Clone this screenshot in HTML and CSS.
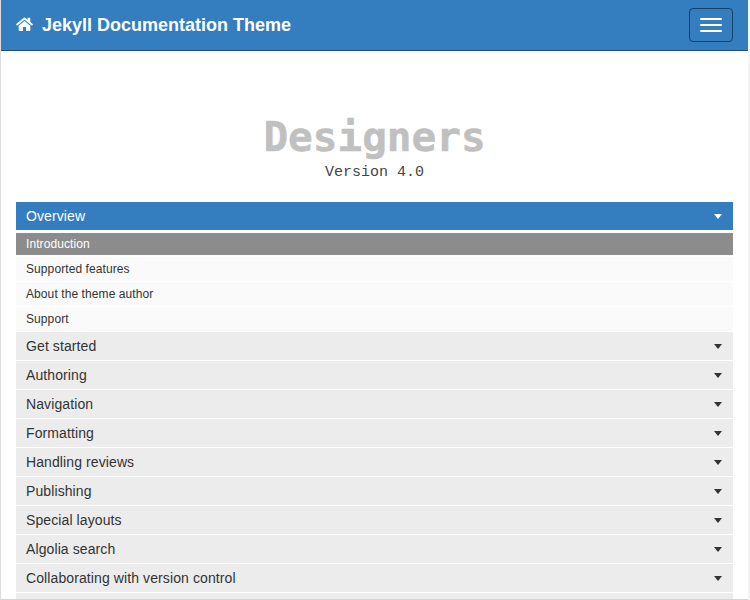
FILE: index.html
```html
<!DOCTYPE html>
<html lang="en">
<head>
<meta charset="utf-8">
<title>Jekyll Documentation Theme</title>
<link rel="stylesheet" href="styles.css">
</head>
<body>
<div class="page">
  <header class="navbar">
    <a class="brand">
      <svg class="home" width="17" height="14" viewBox="0 0 17 14"><path fill="#fff" d="M8.5 4 14.300 8.700V13q0 .9-.9.9H10V9.900H7v4H3.600q-.9 0-.9-.9V8.700ZM0 7.300 7.500 1q1-.8 2 0l2 1.700V.8h2.800V5.100L17 7.300l-1 1.400L8.500 2.700 1 8.700Z"/></svg>
      <span class="brand-name">Jekyll Documentation Theme</span>
    </a>
    <button class="toggle" aria-label="Menu"><span></span><span></span><span></span></button>
  </header>
  <main class="content">
    <h1 class="title">Designers</h1>
    <p class="version">Version 4.0</p>
    <ul class="menu">
      <li class="item open"><span>Overview</span><i class="caret"></i></li>
      <li class="sub active">Introduction</li>
      <li class="sub">Supported features</li>
      <li class="sub">About the theme author</li>
      <li class="sub">Support</li>
      <li class="item"><span>Get started</span><i class="caret"></i></li>
      <li class="item"><span>Authoring</span><i class="caret"></i></li>
      <li class="item"><span>Navigation</span><i class="caret"></i></li>
      <li class="item"><span>Formatting</span><i class="caret"></i></li>
      <li class="item"><span>Handling reviews</span><i class="caret"></i></li>
      <li class="item"><span>Publishing</span><i class="caret"></i></li>
      <li class="item"><span>Special layouts</span><i class="caret"></i></li>
      <li class="item"><span>Algolia search</span><i class="caret"></i></li>
      <li class="item"><span>Collaborating with version control</span><i class="caret"></i></li>
      <li class="item"></li>
    </ul>
  </main>
</div>
</body>
</html>
```
FILE: styles.css
```css
* { box-sizing: border-box; }
body { margin: 0; background: #f4f4f4; font-family: "Liberation Sans", Arial, sans-serif; color: #333; }
.page { width: 748px; height: 600px; overflow: hidden; background: #fff; border-left: 1px solid #dcdcdc; border-bottom: 1px solid #d4d4d4; }
.navbar { height: 51px; background: #347dbe; border-bottom: 1px solid #205081; display: flex; justify-content: space-between; align-items: flex-start; padding: 8px 15px 0; }
.brand { display: flex; align-items: center; height: 34px; color: #fff; font-size: 18px; font-weight: bold; }
.home { display: block; margin: 0 9px 2px 0; }
.brand-name { white-space: nowrap; width: 249px; }
.toggle { width: 44px; height: 34px; padding: 0; background: transparent; border: 1px solid #163f68; border-radius: 4px; display: flex; flex-direction: column; align-items: center; justify-content: center; gap: 4px; }
.toggle span { width: 22px; height: 2px; background: #fff; border-radius: 1px; }
.content { padding: 61px 15px 0; }
.title { margin: 0; height: 51px; text-align: center; font: bold 41px/50px "DejaVu Sans Mono", monospace; color: #c0c0c0; -webkit-text-stroke: 0.5px #c0c0c0; }
.version { margin: 0; height: 20px; text-align: center; font: 15px/20px "Liberation Mono", monospace; color: #444; }
.menu { list-style: none; margin: 19px 0 0; padding: 0; }
.item { height: 28px; margin-bottom: 1px; padding: 0 10px; background: #ececec; display: flex; align-items: center; justify-content: space-between; font-size: 14px; letter-spacing: 0.1px; color: #333; }
.open { background: #347dbe; color: #fff; margin-bottom: 3px; }
.caret { border: 4px solid transparent; border-top: 5px solid currentColor; border-bottom: 0; margin: 1px 1px 0 0; }
.sub { height: 24px; line-height: 24px; margin-bottom: 1px; padding-left: 10px; background: #fafafa; font-size: 12px; letter-spacing: 0.09px; }
.active { height: 22px; line-height: 22px; margin-bottom: 2px; background: #8c8c8c; color: #fff; }
```
